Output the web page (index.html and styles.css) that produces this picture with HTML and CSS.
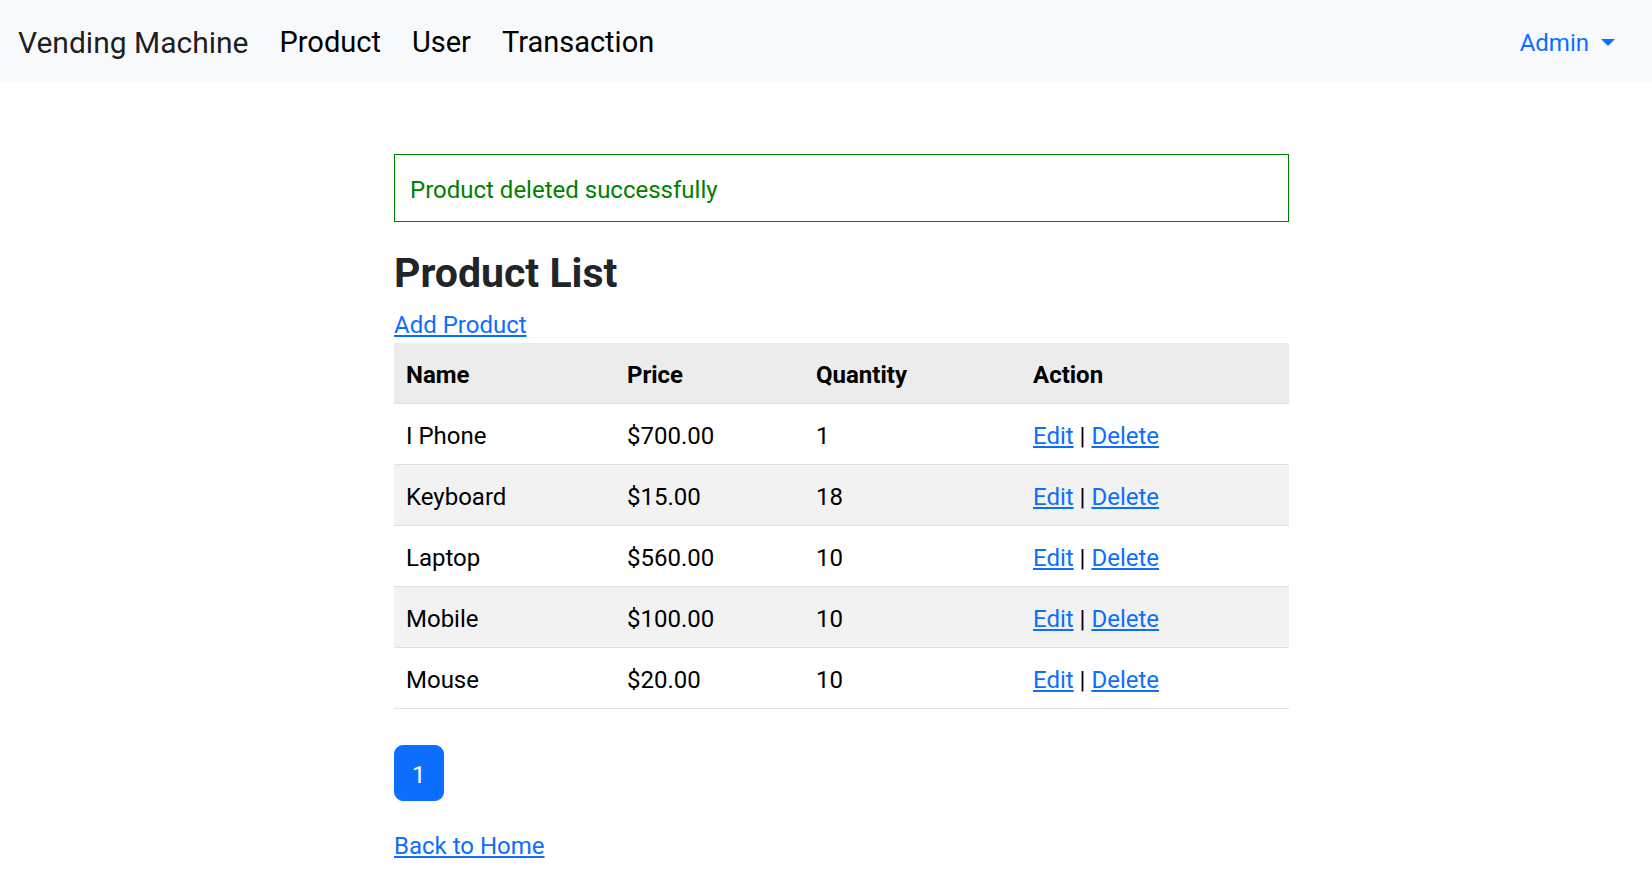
FILE: index.html
```html
<!DOCTYPE html>
<html lang="en">
<head>
<meta charset="utf-8">
<title>Product List</title>
<link rel="stylesheet" href="styles.css">
</head>
<body>
<nav class="navbar">
  <a class="brand" href="#">Vending Machine</a>
  <ul class="nav-links">
    <li><a href="#">Product</a></li>
    <li><a href="#">User</a></li>
    <li><a href="#">Transaction</a></li>
  </ul>
  <a class="admin" href="#">Admin<span class="caret"></span></a>
</nav>

<main class="container">
  <div class="alert">Product deleted successfully</div>
  <h3 class="title">Product List</h3>
  <div class="add"><a class="link" href="#">Add Product</a></div>
  <table class="table">
    <colgroup>
      <col class="c-name"><col class="c-price"><col class="c-qty"><col class="c-action">
    </colgroup>
    <thead>
      <tr><th>Name</th><th>Price</th><th>Quantity</th><th>Action</th></tr>
    </thead>
    <tbody>
      <tr><td>I Phone</td><td>$700.00</td><td>1</td><td><a class="link" href="#">Edit</a> | <a class="link" href="#">Delete</a></td></tr>
      <tr><td>Keyboard</td><td>$15.00</td><td>18</td><td><a class="link" href="#">Edit</a> | <a class="link" href="#">Delete</a></td></tr>
      <tr><td>Laptop</td><td>$560.00</td><td>10</td><td><a class="link" href="#">Edit</a> | <a class="link" href="#">Delete</a></td></tr>
      <tr><td>Mobile</td><td>$100.00</td><td>10</td><td><a class="link" href="#">Edit</a> | <a class="link" href="#">Delete</a></td></tr>
      <tr><td>Mouse</td><td>$20.00</td><td>10</td><td><a class="link" href="#">Edit</a> | <a class="link" href="#">Delete</a></td></tr>
    </tbody>
  </table>
  <div class="pagination"><a class="page" href="#">1</a></div>
  <div class="back"><a class="link" href="#">Back to Home</a></div>
</main>
</body>
</html>
```

FILE: styles.css
```css
* { box-sizing: border-box; }
html, body { margin: 0; padding: 0; }
body {
  font-family: Roboto, "Liberation Sans", sans-serif;
  font-size: 24px;
  line-height: 36px;
  color: #212529;
  background: #fff;
}
a { text-decoration: none; }

.navbar {
  display: flex;
  align-items: center;
  height: 82px;
  padding: 3px 37px 0 18px;
  background: #f8f9fa;
}
.brand {
  font-size: 30px;
  color: rgba(0, 0, 0, 0.9);
  margin-right: 31px;
}
.nav-links {
  display: flex;
  gap: 31px;
  list-style: none;
  margin: 0;
  padding: 0;
}
.nav-links a {
  font-size: 29px;
  color: #000;
}
.admin {
  margin-left: auto;
  color: #0d6efd;
  font-size: 24px;
  display: flex;
  align-items: center;
}
.caret {
  display: inline-block;
  margin-left: 12px;
  border-top: 7px solid #0d6efd;
  border-left: 7px solid transparent;
  border-right: 7px solid transparent;
}

.container {
  width: 895px;
  margin-left: 394px;
}
.alert {
  margin-top: 72px;
  border: 1px solid #008000;
  color: #008000;
  padding: 17px 15px 13px;
}
.title {
  font-size: 41px;
  font-weight: 700;
  line-height: 49px;
  margin: 27px 0 5px;
  color: #212529;
}
.link {
  color: #0d6efd;
  text-decoration: underline;
}
.add {
  padding-top: 4px;
}
.table {
  width: 895px;
  border-collapse: collapse;
  table-layout: fixed;
}
.c-name { width: 221px; }
.c-price { width: 189px; }
.c-qty { width: 217px; }
.c-action { width: 268px; }
.table th, .table td {
  text-align: left;
  padding: 14px 12px 10px;
  border-bottom: 1px solid #dee2e6;
  color: #000;
}
.table th { font-weight: 700; }
.table thead tr { background: #ececec; }
.table tbody tr:nth-child(even) { background: #f2f2f2; }

.pagination {
  display: flex;
  margin-top: 36px;
}
.page {
  display: block;
  background: #0d6efd;
  color: #fff;
  border: 1px solid #0d6efd;
  border-radius: 9px;
  padding: 11px 17px 7px;
}
.back {
  margin-top: 26px;
  padding-top: 1px;
}
```
